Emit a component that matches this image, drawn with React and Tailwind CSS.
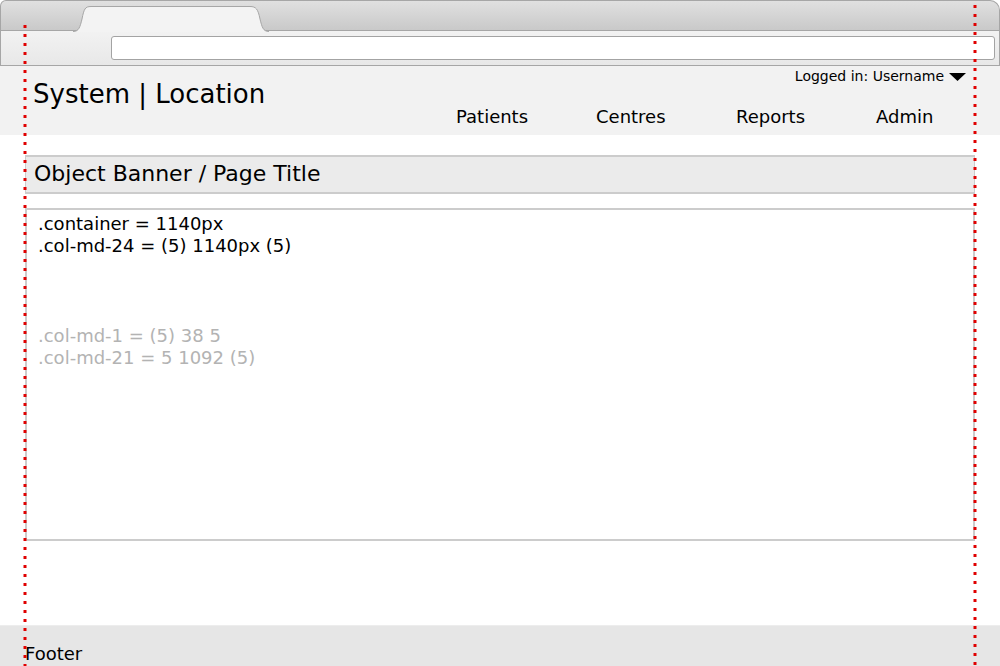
export default function App() {
  const font = { fontFamily: '"DejaVu Sans", sans-serif' };
  return (
    <div className="relative w-[1000px] h-[666px] overflow-hidden bg-white text-black" style={font}>
      {/* Browser chrome */}
      <div className="relative h-[30px] rounded-tr-[10px] rounded-tl-[6px] border border-b-0 border-[#a6a6a6] bg-gradient-to-b from-[#e0e0e0] to-[#c9c9c9]">
        <svg className="absolute left-[72px] top-[4px]" width="196" height="27" viewBox="0 0 196 27">
          <path d="M0 26.5 C6 26.5 7 22 9 14 C11 4 12 1.5 18 1.5 L177 1.5 C183 1.5 185 4 187 14 C189 22 190 26.5 196 26.5" fill="#f3f3f3" stroke="#a6a6a6" strokeWidth="1" />
        </svg>
      </div>
      <div className="h-[36px] border border-t-[#a6a6a6] border-b-[#a6a6a6] border-x-[#a6a6a6] bg-gradient-to-b from-[#f2f2f2] to-[#e8e8e8] flex items-center pl-[110px] pr-[4px]">
        <div className="h-[24px] flex-1 rounded-[3px] border border-[#a3a3a3] bg-white" />
      </div>

      {/* Header */}
      <div className="h-[69px] bg-[#f2f2f2] relative">
        <div className="absolute left-[33px] top-[15px] text-[26px] leading-none">System | Location</div>
        <div className="absolute right-[34px] top-[0px] flex items-center gap-[5px] text-[14px]">
          <span>Logged in: Username</span>
          <svg width="17" height="10" viewBox="0 0 17 10"><path d="M0 1 L17 1 L8.5 9 Z" fill="#000" /></svg>
        </div>
        <nav className="absolute left-[456px] top-[42px] flex text-[18px] leading-none">
          <span className="w-[140px]">Patients</span>
          <span className="w-[140px]">Centres</span>
          <span className="w-[140px]">Reports</span>
          <span>Admin</span>
        </nav>
      </div>

      {/* Main */}
      <div className="px-[25px] pt-[20px]">
        <div className="h-[39px] bg-[#ebebeb] border-y-2 border-x border-[#cccccc] flex items-center pl-[8px] pb-[3px] text-[22px]">
          Object Banner / Page Title
        </div>
        <div className="mt-[14px] h-[333px] border-2 border-[#cccccc] pl-[11px] pt-[3px] text-[18px] leading-[22px]">
          <div>.container = 1140px</div>
          <div>.col-md-24 = (5) 1140px (5)</div>
          <div className="mt-[68px] text-[#b3b3b3]">.col-md-1 = (5) 38 5</div>
          <div className="text-[#b3b3b3]">.col-md-21 = 5 1092 (5)</div>
        </div>
      </div>

      {/* Footer */}
      <div className="absolute left-0 right-0 top-[625px] h-[41px] bg-[#e6e6e6] border-t border-[#ededed] pl-[25px] pt-[17px] text-[18px] leading-[22px]">
        Footer
      </div>

      {/* Red dotted guides */}
      <svg className="absolute left-0 top-0 pointer-events-none" width="1000" height="666">
        <line x1="25" y1="25" x2="25" y2="666" stroke="#e00000" strokeWidth="3" strokeDasharray="3 6" />
        <line x1="975" y1="5" x2="975" y2="666" stroke="#e00000" strokeWidth="3" strokeDasharray="3 6" />
      </svg>
    </div>
  );
}
